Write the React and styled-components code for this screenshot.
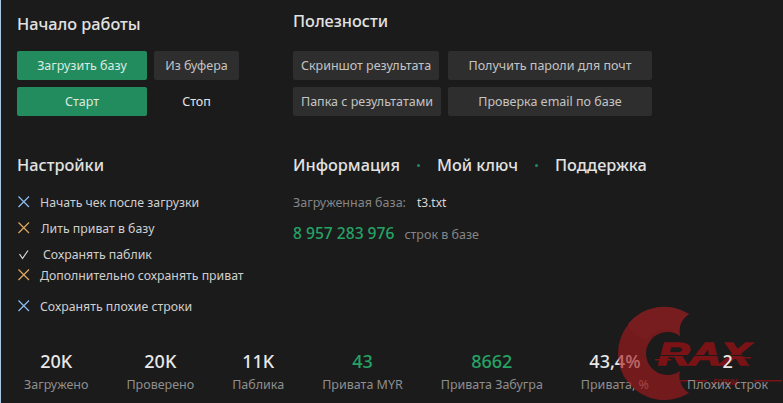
import React from 'react'
import styled, { createGlobalStyle } from 'styled-components'

const GlobalStyle = createGlobalStyle`
  html, body { margin: 0; padding: 0; background: #1b1b1b; }
  * { box-sizing: border-box; }
`

const Window = styled.div`
  position: relative;
  width: 783px;
  height: 403px;
  overflow: hidden;
  background: #1b1b1b;
  border-left: 1px solid #a9c8e6;
  font-family: "Noto Sans", "Open Sans", sans-serif;
  color: #d8d8d8;
`

const Columns = styled.div`
  display: grid;
  grid-template-columns: 276px 1fr;
  padding-left: 16px;
`

const Title = styled.h2`
  margin: 0;
  font-size: 16.3px;
  font-weight: 500;
  line-height: 22px;
  color: #e2e2e2;
`

const TopCell = styled.div`
  height: 145px;
  padding-top: ${p => p.$top}px;
`

const ButtonGrid = styled.div`
  display: grid;
  grid-template-columns: ${p => p.$cols};
  grid-auto-rows: 29px;
  gap: 7px;
  margin-top: ${p => p.$gap}px;
`

const Button = styled.button`
  width: ${p => p.$width || '100%'};
  height: 29px;
  padding: 0;
  border: none;
  border-radius: 2px;
  font-family: inherit;
  font-size: 12.5px;
  color: ${p => (p.$variant === 'primary' ? '#d9ebe1' : p.$variant === 'plain' ? '#e4e4e4' : '#c4c4c4')};
  background: ${p => (p.$variant === 'primary' ? '#238c5e' : p.$variant === 'plain' ? 'transparent' : '#2e2e2e')};
`

const SettingsCell = styled.div`
  height: 205px;
  padding-top: 9px;
`

const CheckList = styled.div`
  margin-top: 13px;
`

const CheckRow = styled.div`
  display: flex;
  align-items: center;
  height: ${p => p.$height}px;
  font-size: 12.3px;
  color: #cfcfcf;
`

const CheckIcon = styled.svg`
  flex: none;
  width: 14px;
  height: 14px;
  margin-right: ${p => p.$space}px;
  fill: none;
  stroke: ${p => p.$color};
  stroke-width: 1.2;
`

const InfoHeader = styled.div`
  display: flex;
  align-items: center;
`

const Dot = styled.span`
  width: 3px;
  height: 3px;
  margin: 0 ${p => p.$space}px;
  border-radius: 50%;
  background: #238c5e;
`

const InfoRow = styled.div`
  display: flex;
  align-items: baseline;
  margin-top: ${p => p.$top}px;
  font-size: 12.5px;
  color: #858585;
`

const FileName = styled.span`
  margin-left: 11px;
  font-size: 12px;
  color: #d8d8d8;
`

const Count = styled.span`
  margin-right: 10px;
  font-size: 15.6px;
  font-weight: 500;
  color: #25a366;
`

const Stats = styled.div`
  display: flex;
  gap: 38px;
  margin-top: -1px;
  padding-left: 23px;
`

const Stat = styled.div`
  position: relative;
  z-index: ${p => (p.$front ? 1 : 0)};
  display: flex;
  flex-direction: column;
  align-items: center;
`

const StatValue = styled.div`
  font-size: 18px;
  font-weight: 500;
  line-height: 24px;
  color: ${p => (p.$green ? '#25a366' : '#e8e8e8')};
`

const StatLabel = styled.div`
  margin-top: 3px;
  font-size: 12.5px;
  line-height: 17px;
  color: #8e8e8e;
`

const Watermark = styled.svg`
  position: absolute;
  right: 0;
  bottom: 0;
  width: 170px;
  height: 100px;
  pointer-events: none;
`

const LogoText = styled.text`
  font-family: "Liberation Sans", sans-serif;
  font-weight: 700;
  font-style: italic;
  fill: #7a1316;
  stroke: #7a1316;
  stroke-width: ${p => p.$bold}px;
`

const Cross = ({ color, space }) => (
  <CheckIcon $color={color} $space={space} viewBox="0 0 14 14">
    <path d="M1.5 1.5 L12 12 M12 1.5 L1.5 12" />
  </CheckIcon>
)

const Tick = ({ space }) => (
  <CheckIcon $color="#d8d8d8" $space={space} viewBox="0 0 14 14">
    <path d="M2.5 7 L5.5 11.5 L11 3.5" />
  </CheckIcon>
)

const stats = [
  { value: '20K', label: 'Загружено' },
  { value: '20K', label: 'Проверено' },
  { value: '11K', label: 'Паблика' },
  { value: '43', label: 'Привата MYR', green: true },
  { value: '8662', label: 'Привата Забугра', green: true },
  { value: '43,4%', label: 'Привата, %' },
  { value: '2', label: 'Плохих строк', front: true },
]

export default function App() {
  return (
    <Window>
      <GlobalStyle />
      <Columns>
        <TopCell $top={13}>
          <Title>Начало работы</Title>
          <ButtonGrid $cols="130px 85px" $gap={16}>
            <Button $variant="primary">Загрузить базу</Button>
            <Button>Из буфера</Button>
            <Button $variant="primary">Старт</Button>
            <Button $variant="plain">Стоп</Button>
          </ButtonGrid>
        </TopCell>
        <TopCell $top={10}>
          <Title>Полезности</Title>
          <ButtonGrid $cols="148px 204px" $gap={19}>
            <Button $width="146px">Скриншот результата</Button>
            <Button>Получить пароли для почт</Button>
            <Button>Папка с результатами</Button>
            <Button>Проверка email по базе</Button>
          </ButtonGrid>
        </TopCell>
        <SettingsCell>
          <Title>Настройки</Title>
          <CheckList>
            <CheckRow $height={26}><Cross color="#8fbdf0" space={9} />Начать чек после загрузки</CheckRow>
            <CheckRow $height={26}><Cross color="#e0a860" space={10} />Лить приват в базу</CheckRow>
            <CheckRow $height={26}><Tick space={12} />Сохранять паблик</CheckRow>
            <CheckRow $height={16}><Cross color="#e0a860" space={9} />Дополнительно сохранять приват</CheckRow>
            <CheckRow $height={46}><Cross color="#8fbdf0" space={9} />Сохранять плохие строки</CheckRow>
          </CheckList>
        </SettingsCell>
        <SettingsCell>
          <InfoHeader>
            <Title>Информация</Title>
            <Dot $space={17} />
            <Title>Мой ключ</Title>
            <Dot $space={17} />
            <Title>Поддержка</Title>
          </InfoHeader>
          <InfoRow $top={18}>Загруженная база:<FileName>t3.txt</FileName></InfoRow>
          <InfoRow $top={11}><Count>8 957 283 976</Count>строк в базе</InfoRow>
        </SettingsCell>
      </Columns>
      <Stats>
        {stats.map(s => (
          <Stat key={s.label} $front={s.front}>
            <StatValue $green={s.green}>{s.value}</StatValue>
            <StatLabel>{s.label}</StatLabel>
          </Stat>
        ))}
      </Stats>
      <Watermark viewBox="0 0 170 100">
        <g opacity="0.62">
          <path
            fill="#a81a1e"
            d="M76 11 A46.5 46.5 0 1 0 76 90 A20 20 0 0 1 67 68 A21.5 21.5 0 1 1 67 33 A20 20 0 0 1 76 11 Z"
          />
          <path
            fill="#b01f23"
            d="M15 21 A46.5 46.5 0 0 1 76 11 A20 20 0 0 0 67 33 A21.5 21.5 0 0 0 34 37 A25 25 0 0 1 15 21 Z"
          />
        </g>
        <LogoText x="45" y="62" fontSize="32" $bold={1.6} textLength="92" lengthAdjust="spacingAndGlyphs">RAX</LogoText>
        <rect x="45" y="52" width="94" height="1" fill="#1b1b1b" />
        <rect x="42" y="56" width="16" height="1.5" fill="#7a1316" />
        <rect x="128" y="54" width="10" height="1.5" fill="#7a1316" />
        <LogoText x="100" y="82" fontSize="9" $bold={0.2} textLength="24" lengthAdjust="spacingAndGlyphs">FORUM</LogoText>
        <rect x="67" y="77" width="27" height="1.5" fill="#7a1316" />
        <rect x="141" y="77" width="28" height="1.5" fill="#7a1316" />
      </Watermark>
    </Window>
  )
}
